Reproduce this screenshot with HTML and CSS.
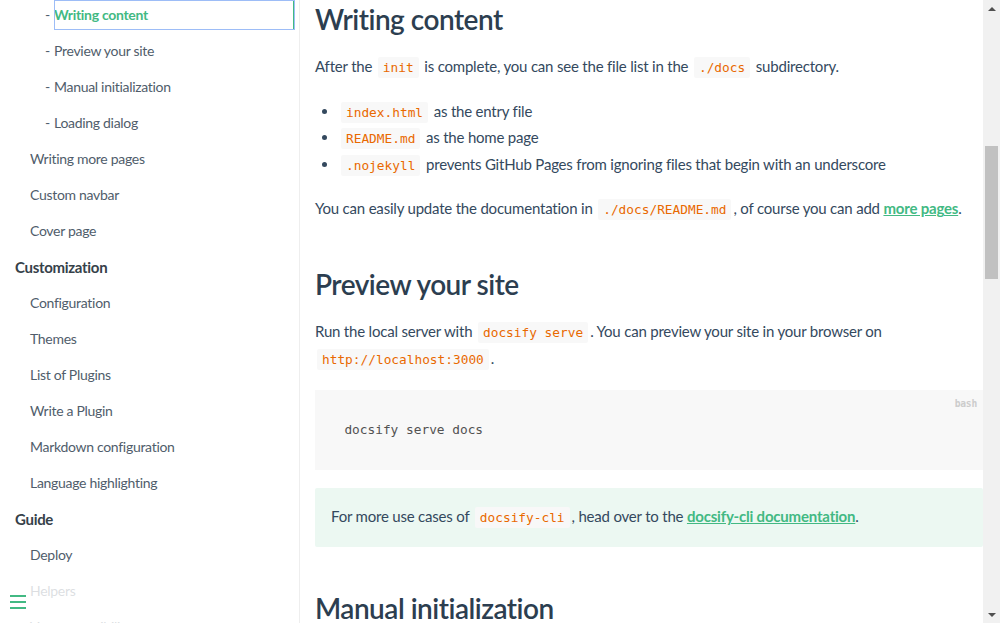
FILE: index.html
```html
<!DOCTYPE html>
<html lang="en">
<head>
<meta charset="utf-8">
<title>docsify - Quick start</title>
<link rel="stylesheet" href="styles.css">
</head>
<body>
<aside class="sidebar">
  <nav class="sidebar-nav">
    <a class="nav-item lvl3 active" href="#writing-content">Writing content</a>
    <a class="nav-item lvl3" href="#preview-your-site">Preview your site</a>
    <a class="nav-item lvl3" href="#manual-initialization">Manual initialization</a>
    <a class="nav-item lvl3" href="#loading-dialog">Loading dialog</a>
    <a class="nav-item lvl2" href="#more-pages">Writing more pages</a>
    <a class="nav-item lvl2" href="#custom-navbar">Custom navbar</a>
    <a class="nav-item lvl2" href="#cover">Cover page</a>
    <p class="nav-item lvl1 nav-head">Customization</p>
    <a class="nav-item lvl2" href="#configuration">Configuration</a>
    <a class="nav-item lvl2" href="#themes">Themes</a>
    <a class="nav-item lvl2" href="#plugins">List of Plugins</a>
    <a class="nav-item lvl2" href="#write-a-plugin">Write a Plugin</a>
    <a class="nav-item lvl2" href="#markdown">Markdown configuration</a>
    <a class="nav-item lvl2" href="#language-highlight">Language highlighting</a>
    <p class="nav-item lvl1 nav-head">Guide</p>
    <a class="nav-item lvl2" href="#deploy">Deploy</a>
    <a class="nav-item lvl2" href="#helpers">Helpers</a>
    <a class="nav-item lvl2" href="#vue">Vue compatibility</a>
  </nav>
  <button class="sidebar-toggle" aria-label="Menu">
    <span></span><span></span><span></span>
  </button>
</aside>
<main class="content">
  <section class="markdown-section">
    <h2 id="writing-content">Writing content</h2>
    <p>After the <code>init</code> is complete, you can see the file list in the <code>./docs</code> subdirectory.</p>
    <ul>
      <li><code>index.html</code> as the entry file</li>
      <li><code>README.md</code> as the home page</li>
      <li><code>.nojekyll</code> prevents GitHub Pages from ignoring files that begin with an underscore</li>
    </ul>
    <p>You can easily update the documentation in <code>./docs/README.md</code>, of course you can add <a href="#more-pages">more pages</a>.</p>
    <h2 id="preview-your-site">Preview your site</h2>
    <p>Run the local server with <code>docsify serve</code>. You can preview your site in your browser on <code>http://localhost:3000</code>.</p>
    <pre data-lang="bash"><code>docsify serve docs</code></pre>
    <p class="warn">For more use cases of <code>docsify-cli</code>, head over to the <a href="#cli">docsify-cli documentation</a>.</p>
    <h2 id="manual-initialization">Manual initialization</h2>
  </section>
</main>
<div class="scrollbar">
  <div class="sb-btn"><span class="tri-up"></span></div>
  <div class="sb-track"><div class="sb-thumb"></div></div>
  <div class="sb-btn"><span class="tri-down"></span></div>
</div>
</body>
</html>
```
FILE: styles.css
```css
* { box-sizing: border-box; }

html, body {
  margin: 0;
  height: 623px;
  overflow: hidden;
}

body {
  display: flex;
  font-family: "Lato", "Noto Sans", sans-serif;
  font-size: 15px;
  letter-spacing: -0.2px;
  color: #34495e;
  background: #fff;
  -webkit-font-smoothing: antialiased;
}

/* ---------- sidebar ---------- */
.sidebar {
  position: relative;
  width: 300px;
  flex: 0 0 300px;
  border-right: 1px solid #eee;
  padding-right: 4px;
  overflow: hidden;
}

.sidebar-nav {
  display: flex;
  flex-direction: column;
  gap: 6px;
  line-height: 30px;
  letter-spacing: -0.3px;
}

.nav-item {
  display: block;
  height: 30px;
  margin: 0;
  font-size: 14px;
  color: #505d6b;
  text-decoration: none;
  white-space: nowrap;
}

.lvl1 { margin-left: 15px; }
.lvl2 { margin-left: 30px; }
.lvl3 { margin-left: 54px; position: relative; }

.lvl3::before {
  content: "-";
  position: absolute;
  left: -9px;
  color: #505d6b;
  font-weight: 400;
}

.nav-head {
  font-size: 15px;
  font-weight: 700;
  color: #364149;
}

.nav-item.active {
  color: #42b983;
  font-weight: 700;
  border-right: 2px solid #42b983;
  outline: 1px solid #9dbdf7;
  outline-offset: -1px;
}

.sidebar-toggle {
  position: absolute;
  left: 0;
  bottom: 0;
  width: 284px;
  padding: 10px;
  border: 0;
  margin: 0;
  background: rgba(255, 255, 255, 0.8);
  display: flex;
  flex-direction: column;
  align-items: flex-start;
  cursor: pointer;
}

.sidebar-toggle span {
  display: block;
  width: 16px;
  height: 2px;
  margin-bottom: 4px;
  background: #42b983;
}

/* ---------- content ---------- */
.content {
  flex: 1;
  min-width: 0;
  overflow: hidden;
  padding-left: 15px;
}

.markdown-section h2 {
  font-size: 28px;
  font-weight: 600;
  letter-spacing: -0.5px;
  color: #2c3e50;
  line-height: 34px;
  margin: 44px 0 18px;
}

.markdown-section h2:first-child {
  margin-top: 2px;
}

.markdown-section p,
.markdown-section ul {
  line-height: 25.6px;
  margin: 18px 0;
}

.markdown-section ul {
  padding-left: 24px;
}

.markdown-section code {
  font-family: "DejaVu Sans Mono", "Liberation Mono", monospace;
  font-size: 12.8px;
  letter-spacing: 0;
  color: #e96900;
  background: #f8f8f8;
  padding: 3px 5px;
  margin: 0 2px;
  border-radius: 2px;
}

.markdown-section a {
  color: #42b983;
  font-weight: 700;
}

.markdown-section pre {
  position: relative;
  margin: 18px 0;
  padding: 0 22.4px;
  background: #f8f8f8;
  line-height: 24px;
}

.markdown-section pre code {
  display: block;
  padding: 28px 5px;
  margin: 0 2px;
  color: #525252;
  line-height: 24px;
}

.markdown-section pre::after {
  content: attr(data-lang);
  position: absolute;
  top: 0;
  right: 0;
  padding: 6px;
  font-size: 9.6px;
  font-weight: 700;
  line-height: 15px;
  color: #ccc;
}

.markdown-section p.warn {
  background: rgba(66, 185, 131, 0.1);
  border-radius: 2px;
  padding: 16px;
}

/* ---------- fake window scrollbar ---------- */
.scrollbar {
  flex: 0 0 17px;
  width: 17px;
  background: #f1f1f1;
  display: flex;
  flex-direction: column;
}

.sb-btn {
  height: 17px;
  display: flex;
  align-items: center;
  justify-content: center;
}

.tri-up,
.tri-down {
  width: 0;
  height: 0;
  border-left: 4px solid transparent;
  border-right: 4px solid transparent;
}

.tri-up { border-bottom: 4px solid #505050; }
.tri-down { border-top: 4px solid #505050; }

.sb-track {
  flex: 1;
  padding: 129px 2px 0;
}

.sb-thumb {
  height: 133px;
  background: #c1c1c1;
}
```
